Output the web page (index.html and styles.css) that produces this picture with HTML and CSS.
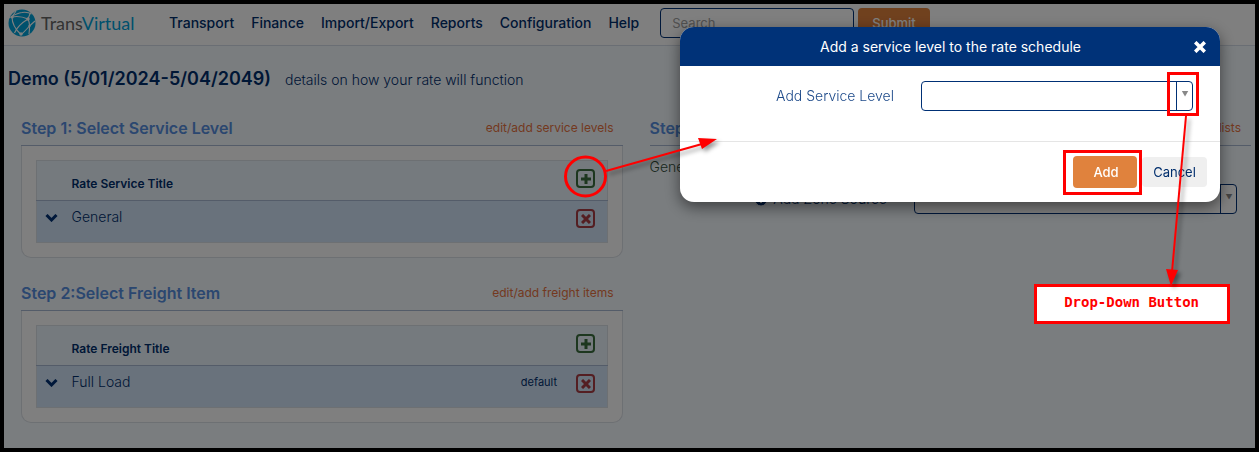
FILE: index.html
```html
<!DOCTYPE html>
<html lang="en">
<head>
  <meta charset="UTF-8" />
  <meta name="viewport" content="width=device-width, initial-scale=1.0"/>
  <title>TransVirtual - Rate Schedule</title>
  <link rel="stylesheet" href="styles.css">
</head>
<body>

  <header class="topbar">
    <a class="logo" href="#">
      <svg class="globe" viewBox="0 0 28 28" aria-hidden="true">
        <circle cx="14" cy="14" r="13.5" fill="#00a3da"/>
        <g fill="none" stroke="#fff" stroke-width="1.1">
          <path d="M1 9C6 6 9 4 14 3.500C18 3 21 3.500 23.500 5"/>
          <path d="M4 8C9 7 13 7 20 10L22.500 3.500"/>
          <path d="M20 10C22 14 22 18 21 25"/>
          <path d="M20 10C15 13 9 18 6.500 24"/>
          <path d="M4 8C4 14 7 20 13 25.500"/>
          <path d="M4 8L8 2"/>
          <path d="M27 12L21.500 17C18 21 15 24 13 25.500"/>
        </g>
        <g fill="#fff">
          <circle cx="4.200" cy="8" r="1.500"/>
          <circle cx="20" cy="10" r="1.700"/>
          <circle cx="13" cy="25" r="1.700"/>
          <circle cx="21.500" cy="17" r="1.200"/>
        </g>
      </svg>
      <span class="logo-text">Trans<span class="logo-blue">Virtual</span></span>
    </a>
    <nav class="menu">
      <a href="#">Transport</a>
      <a href="#">Finance</a>
      <a href="#">Import/Export</a>
      <a href="#">Reports</a>
      <a href="#">Configuration</a>
      <a href="#">Help</a>
    </nav>
    <form class="search">
      <input type="search" placeholder="Search" aria-label="Search">
      <button type="button" class="btn-orange">Submit</button>
    </form>
  </header>

  <main>
    <div class="page-title">
      <h1>Demo (5/01/2024-5/04/2049)</h1>
      <span>details on how your rate will function</span>
    </div>

    <div class="steps">
      <div class="column">
        <section>
          <div class="step-head">
            <h2>Step 1: Select Service Level</h2>
            <a href="#">edit/add service levels</a>
          </div>
          <div class="panel">
            <table>
              <thead>
                <tr>
                  <th class="toggle"></th>
                  <th>Rate Service Title</th>
                  <th class="note"></th>
                  <th class="action">
                    <button type="button" class="icon-btn add" aria-label="Add service level">
                      <svg viewBox="0 0 10 10"><path d="M5 0V10M0 5H10"/></svg>
                    </button>
                  </th>
                </tr>
              </thead>
              <tbody>
                <tr>
                  <td class="toggle"><svg viewBox="0 0 12 8"><path d="M1 1L6 6L11 1"/></svg></td>
                  <td>General</td>
                  <td class="note"></td>
                  <td class="action">
                    <button type="button" class="icon-btn remove" aria-label="Remove General">
                      <svg viewBox="0 0 10 10"><path d="M1 1L9 9M9 1L1 9"/></svg>
                    </button>
                  </td>
                </tr>
              </tbody>
            </table>
          </div>
        </section>

        <section>
          <div class="step-head">
            <h2>Step 2:Select Freight Item</h2>
            <a href="#">edit/add freight items</a>
          </div>
          <div class="panel">
            <table>
              <thead>
                <tr>
                  <th class="toggle"></th>
                  <th>Rate Freight Title</th>
                  <th class="note"></th>
                  <th class="action">
                    <button type="button" class="icon-btn add" aria-label="Add freight item">
                      <svg viewBox="0 0 10 10"><path d="M5 0V10M0 5H10"/></svg>
                    </button>
                  </th>
                </tr>
              </thead>
              <tbody>
                <tr>
                  <td class="toggle"><svg viewBox="0 0 12 8"><path d="M1 1L6 6L11 1"/></svg></td>
                  <td>Full Load</td>
                  <td class="note">default</td>
                  <td class="action">
                    <button type="button" class="icon-btn remove" aria-label="Remove Full Load">
                      <svg viewBox="0 0 10 10"><path d="M1 1L9 9M9 1L1 9"/></svg>
                    </button>
                  </td>
                </tr>
              </tbody>
            </table>
          </div>
        </section>
      </div>

      <section class="column">
        <div class="step-head zone-head">
          <h2>Step</h2>
          <a href="#">lists</a>
        </div>
        <p class="zone-name">General</p>
        <div class="zone-row">
          <label for="zone">
            <svg class="info" viewBox="0 0 12 12"><circle cx="6" cy="6" r="6"/><path d="M6 2V9M3 6L6 9L9 6"/></svg>
            Add Zone Source
          </label>
          <div class="select">
            <select id="zone"><option></option></select>
            <span class="arrow">▼</span>
          </div>
        </div>
      </section>
    </div>
  </main>

  <div class="overlay"></div>

  <div class="modal" role="dialog" aria-labelledby="modal-title">
    <div class="modal-header">
      <h3 id="modal-title">Add a service level to the rate schedule</h3>
      <button type="button" class="close" aria-label="Close">
        <svg viewBox="0 0 10 10"><path d="M1 1L9 9M9 1L1 9"/></svg>
      </button>
    </div>
    <div class="modal-body">
      <label for="level">Add Service Level</label>
      <div class="select">
        <select id="level"><option></option></select>
        <span class="arrow">▼</span>
      </div>
    </div>
    <div class="modal-footer">
      <button type="button" class="btn-orange btn-add">Add</button>
      <button type="button" class="btn-cancel">Cancel</button>
    </div>
  </div>

  <div class="callout">Drop-Down Button</div>

  <svg class="marks" width="1259" height="452" viewBox="0 0 1259 452" aria-hidden="true">
    <g class="mark-line">
      <ellipse cx="585.500" cy="176.500" rx="20" ry="19.500"/>
      <rect x="1168.500" y="73.500" width="29" height="41"/>
      <rect x="1064.500" y="151.500" width="76" height="42"/>
    </g>
    <g class="mark-arrow">
      <path class="shaft" d="M606 171L702 144"/>
      <path d="M698 138L717 139L702 149Z"/>
      <path class="shaft" d="M1186 116L1172 272"/>
      <path d="M1166 269L1178 270L1171 286Z"/>
    </g>
  </svg>

</body>
</html>
```
FILE: styles.css
```css
* {
  box-sizing: border-box;
}

body {
  margin: 0;
  min-height: 100vh;
  border: 4px solid #000;
  background: #f4faff;
  color: #002e6d;
  font-family: Inter, Arial, sans-serif;
  font-size: 14px;
  line-height: 20px;
}

h1, h2, h3, p {
  margin: 0;
}

a {
  text-decoration: none;
}

button, input, select {
  font-family: inherit;
  font-size: 13px;
}

/* Top bar */
.topbar {
  display: flex;
  align-items: center;
  height: 42px;
  padding: 0 4px 3px;
  background: #fff;
  border-bottom: 1px solid #d5dde8;
}

.logo {
  display: flex;
  align-items: center;
  gap: 5px;
  width: 161px;
}

.globe {
  width: 28px;
  height: 28px;
}

.logo-text {
  font-family: Lato, sans-serif;
  font-size: 18px;
  color: #666;
}

.logo-blue {
  color: #00a3da;
}

.menu {
  display: flex;
  gap: 17px;
}

.menu a {
  color: #002e6d;
  font-weight: 500;
}

.search {
  display: flex;
  gap: 4px;
  margin-left: 21px;
}

.search input {
  width: 194px;
  height: 30px;
  padding: 0 11px;
  border: 1px solid #003075;
  border-radius: 4px;
  background: #fff;
}

.search input::placeholder {
  color: #a0a0a0;
}

.btn-orange {
  height: 30px;
  padding: 0 14px;
  border: 0;
  border-radius: 4px;
  background: #e0823d;
  color: #fff;
  font-weight: 500;
}

/* Page */
.page-title {
  display: flex;
  align-items: baseline;
  gap: 14px;
  padding: 21px 4px 0;
}

.page-title h1 {
  font-size: 18px;
  font-weight: 600;
  line-height: 24px;
}

.page-title span {
  font-weight: 300;
}

.steps {
  display: grid;
  grid-template-columns: 1fr 1fr;
  gap: 27px;
  padding: 24px 4px 0 17px;
}

.column section + section {
  margin-top: 22px;
}

.step-head {
  display: flex;
  justify-content: space-between;
  align-items: center;
  height: 31px;
  padding: 0 9px 4px 0;
  border-bottom: 1px solid #a9b9d3;
}

.step-head h2 {
  color: #568fe0;
  font-size: 16px;
  font-weight: 600;
}

.step-head a {
  color: #e8733f;
  font-size: 12px;
}

.panel {
  padding: 14px;
  background: #fff;
  border: 1px solid #dbe0e6;
  border-top: 0;
  border-radius: 0 0 10px 10px;
}

table {
  width: 100%;
  border-collapse: collapse;
  border: 1px solid #dbe0e6;
}

th {
  height: 40px;
  padding: 7px 0 0;
  background: #ebf5fd;
  border-bottom: 1px solid #a9b9d3;
  font-size: 12px;
  font-weight: 600;
  text-align: left;
}

td {
  height: 42px;
  padding: 6px 0 0;
  background: #d2e5f8;
  font-weight: 300;
  vertical-align: top;
}

.toggle {
  width: 35px;
  padding-left: 8px;
}

.toggle svg {
  width: 13px;
  height: 8px;
  fill: none;
  stroke: #003075;
  stroke-width: 3;
}

.note {
  width: 70px;
  font-size: 11px;
  font-weight: 400;
  text-align: right;
}

.action {
  width: 50px;
  padding-left: 19px;
}

th.action {
  padding: 0 0 4px 19px;
}

td.action {
  padding-top: 8px;
}

.icon-btn {
  display: flex;
  align-items: center;
  justify-content: center;
  width: 19px;
  height: 19px;
  padding: 1px 0 0;
  border: 2px solid;
  border-radius: 4px;
  background: none;
}

.icon-btn svg {
  width: 10px;
  height: 10px;
  stroke: currentColor;
  stroke-width: 3;
}

.add {
  color: #3a6e3e;
}

.remove {
  color: #a83c44;
}

/* Zone source */
.zone-head {
  padding-right: 10px;
}

.zone-name {
  padding-top: 11px;
  font-weight: 300;
  color: #33503c;
}

.zone-row {
  display: flex;
  justify-content: flex-end;
  align-items: center;
  gap: 27px;
  padding: 7px 14px 0 0;
}

.zone-row label {
  font-weight: 300;
}

.info {
  width: 12px;
  height: 12px;
  margin-right: 2px;
  fill: #003075;
  stroke: #fff;
  vertical-align: middle;
}

.info path {
  fill: none;
}

.zone-row .select {
  width: 55%;
}

.select {
  position: relative;
  height: 30px;
}

.select select {
  width: 100%;
  height: 100%;
  appearance: none;
  border: 1px solid #003075;
  border-radius: 4px;
  background: #fff;
}

.arrow {
  position: absolute;
  top: 0;
  right: 0;
  width: 17px;
  height: 30px;
  border-left: 1px solid #003075;
  color: #888;
  font-size: 7px;
  line-height: 27px;
  text-align: center;
  pointer-events: none;
}

/* Modal */
.overlay {
  position: fixed;
  inset: 4px;
  background: rgba(0, 0, 0, 0.5);
}

.modal {
  position: fixed;
  top: 27px;
  right: 39px;
  width: 540px;
  background: #fff;
  border-radius: 14px;
  overflow: hidden;
  box-shadow: 0 5px 15px rgba(0, 0, 0, 0.5);
}

.modal-header {
  display: flex;
  align-items: center;
  height: 39px;
  padding: 0 13px;
  background: #003278;
  color: #fff;
}

.modal-header h3 {
  flex: 1;
  padding-left: 14px;
  font-size: 14px;
  font-weight: 400;
  text-align: center;
}

.close {
  display: flex;
  width: 13px;
  padding: 0;
  border: 0;
  background: none;
}

.close svg {
  width: 12px;
  height: 12px;
  stroke: #fff;
  stroke-width: 3;
}

.modal-body {
  display: flex;
  justify-content: flex-end;
  align-items: center;
  gap: 27px;
  padding: 15px 27px 30px;
}

.modal-body label {
  color: #1d4a8a;
  font-weight: 300;
}

.modal-body .select {
  width: 272px;
}

.modal-footer {
  display: flex;
  justify-content: flex-end;
  align-items: center;
  gap: 5px;
  padding: 14px 13px;
  border-top: 1px solid #e5e5e5;
}

.btn-add {
  width: 64px;
  height: 32px;
  padding: 0 0 0 2px;
}

.btn-cancel {
  width: 65px;
  height: 30px;
  padding: 0;
  border: 0;
  border-radius: 4px;
  background: #efefef;
  color: #002e6d;
}

/* Instruction marks */
.callout {
  position: absolute;
  top: 284px;
  right: 29px;
  padding: 5px 28px 9px 27px;
  border: 3px solid #f00;
  background: #fff;
  color: #f00;
  font-family: "DejaVu Sans Mono", monospace;
  font-weight: bold;
}

.marks {
  position: absolute;
  top: 0;
  left: 0;
  pointer-events: none;
}

.mark-line {
  fill: none;
  stroke: #f00;
  stroke-width: 3;
}

.mark-arrow {
  fill: #f00;
  filter: drop-shadow(3px 3px 2px rgba(0, 0, 0, 0.4));
}

.shaft {
  stroke: #f00;
  stroke-width: 2;
}
```
